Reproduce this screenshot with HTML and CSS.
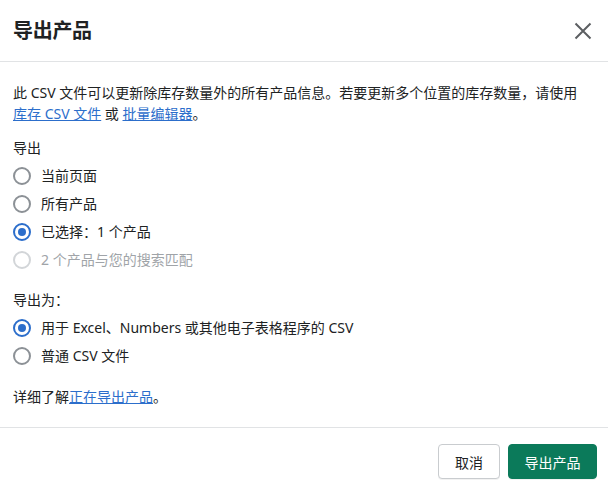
FILE: index.html
```html
<!DOCTYPE html>
<html lang="zh-CN">
<head>
<meta charset="utf-8">
<title>导出产品</title>
<link rel="stylesheet" href="styles.css">
</head>
<body>
<div class="modal">
  <header class="modal-header">
    <h2 class="modal-title">导出产品</h2>
    <button class="close-btn" aria-label="关闭">
      <svg width="20" height="20" viewBox="0 0 20 20"><path d="M2.5 2.5 L17.5 17.5 M17.5 2.5 L2.5 17.5" stroke="#5c5f62" stroke-width="2" fill="none"/></svg>
    </button>
  </header>
  <section class="modal-body">
    <p class="intro">此 CSV 文件可以更新除库存数量外的所有产品信息。若要更新多个位置的库存数量，请使用 <a class="nowrap" href="#">库存 CSV 文件</a> 或 <a class="nowrap" href="#">批量编辑器</a>。</p>

    <div class="group">
      <div class="group-label">导出</div>
      <label class="radio"><span class="dot"></span><span>当前页面</span></label>
      <label class="radio"><span class="dot"></span><span>所有产品</span></label>
      <label class="radio checked"><span class="dot"></span><span>已选择：1 个产品</span></label>
      <label class="radio disabled"><span class="dot"></span><span>2 个产品与您的搜索匹配</span></label>
    </div>

    <div class="group">
      <div class="group-label">导出为：</div>
      <label class="radio checked"><span class="dot"></span><span>用于 Excel、Numbers 或其他电子表格程序的 CSV</span></label>
      <label class="radio"><span class="dot"></span><span>普通 CSV 文件</span></label>
    </div>

    <p class="more">详细了解<a href="#">正在导出产品</a>。</p>
  </section>
  <footer class="modal-footer">
    <button class="btn">取消</button>
    <button class="btn primary">导出产品</button>
  </footer>
</div>
</body>
</html>
```

FILE: styles.css
```css
html, body {
  margin: 0;
  padding: 0;
  background: #ffffff;
}
body {
  font-family: "Noto Sans", "Noto Sans CJK SC", sans-serif;
  font-size: 14px;
  line-height: 20px;
  color: #202223;
}
.modal {
  width: 608px;
}
.modal-header {
  height: 61px;
  border-bottom: 1px solid #e1e3e5;
  display: flex;
  align-items: center;
  justify-content: space-between;
  padding: 0 13px;
  margin-top: -4px;
  padding-top: 4px;
}
.modal-title {
  margin: 0;
  font-size: 20px;
  font-weight: 700;
  line-height: 28px;
  letter-spacing: -0.3px;
}
.close-btn {
  border: 0;
  background: none;
  padding: 0;
  width: 20px;
  height: 20px;
  margin-right: 2px;
  display: flex;
  cursor: pointer;
}
.modal-body {
  padding: 20px 13px 20px;
  border-bottom: 1px solid #e1e3e5;
}
.intro {
  margin: 0 0 14px;
  line-height: 21px;
}
a {
  color: #2c6ecb;
  text-decoration: underline;
}
.nowrap {
  white-space: nowrap;
}
.group {
  margin-bottom: 16px;
}
.group-label {
  margin-bottom: 4px;
}
.radio {
  display: flex;
  align-items: center;
  height: 28px;
  gap: 10px;
}
.dot {
  width: 18px;
  height: 18px;
  box-sizing: border-box;
  border: 2px solid #8c9196;
  border-radius: 50%;
  display: flex;
  align-items: center;
  justify-content: center;
  flex: none;
}
.radio.checked .dot {
  border-color: #2c6ecb;
}
.radio.checked .dot::after {
  content: "";
  width: 8px;
  height: 8px;
  border-radius: 50%;
  background: #2c6ecb;
}
.radio.disabled {
  color: #a0a4a8;
}
.radio.disabled .dot {
  border-color: #d2d5d8;
}
.more {
  margin: 17px 0 0;
}
.modal-footer {
  display: flex;
  justify-content: flex-end;
  gap: 8px;
  padding: 16px 11px 9px;
}
.btn {
  font-family: inherit;
  font-size: 14px;
  height: 35px;
  padding: 0 16px;
  border: 1px solid #c9cccf;
  border-radius: 4px;
  background: #ffffff;
  color: #202223;
  box-shadow: 0 1px 0 rgba(0,0,0,0.05);
  cursor: pointer;
}
.btn.primary {
  background: #0b7a5a;
  border-color: #0b7a5a;
  color: #ffffff;
  width: 89px;
  padding: 0;
}
```
